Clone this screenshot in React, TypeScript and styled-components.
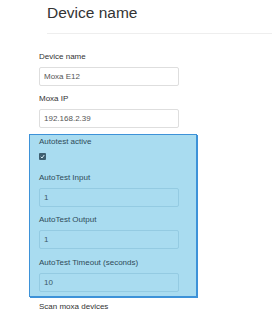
import React from "react";
import styled, { createGlobalStyle } from "styled-components";

const GlobalStyle = createGlobalStyle`
  body {
    margin: 0;
    background: #ffffff;
    font-family: "Liberation Sans", Arial, sans-serif;
  }
`;

const Page = styled.div`
  width: 272px;
  height: 312px;
  overflow: hidden;
  background: #ffffff;
`;

const PageHeader = styled.div`
  margin-left: 47px;
  padding: 4px 0 11px;
  border-bottom: 1px solid #eeeeee;
`;

const Title = styled.h1`
  margin: 0;
  font-size: 15.5px;
  line-height: 18px;
  font-weight: 400;
  color: #333333;
`;

const Form = styled.div`
  display: flex;
  flex-direction: column;
  gap: 7.5px;
  padding: 16.5px 0 0 29px;
`;

const Field = styled.div<{ extra?: number }>`
  display: flex;
  flex-direction: column;
  align-items: flex-start;
  padding-left: 10px;
  margin-bottom: ${({ extra }) => extra || 0}px;
`;

const Label = styled.label`
  font-size: 8px;
  line-height: 11px;
  color: #333333;
  margin-bottom: 5px;
`;

const Input = styled.input`
  box-sizing: border-box;
  width: 140px;
  height: 19px;
  padding: 0 4px;
  font-family: "Liberation Sans", Arial, sans-serif;
  font-size: 8px;
  color: #555555;
  background: #ffffff;
  border: 1px solid #dedede;
  border-radius: 2px;
  outline: none;
`;

const Highlight = styled.div`
  width: 168px;
  box-sizing: border-box;
  margin-top: -1.5px;
  padding: 1px 0 4px;
  display: flex;
  flex-direction: column;
  gap: 7.5px;
  background: #a9dcf0;
  border: 1px solid #3d92d8;
  box-shadow: 1px 1px 0 #3d92d8;

  ${Field} {
    padding-left: 9px;
  }

  ${Label} {
    color: #2f4b58;
  }

  ${Input} {
    background: transparent;
    border-color: #94cbe2;
    color: #3c5866;
  }
`;

const CheckBox = styled.span`
  width: 7px;
  height: 7px;
  margin-top: 1px;
  border-radius: 1px;
  background: #3e5f70;
  display: flex;
  align-items: center;
  justify-content: center;
`;

const After = styled.div`
  margin-top: -3px;
  padding-left: 10px;
  font-size: 8px;
  line-height: 11px;
  color: #333333;
`;

export default function App() {
  return (
    <Page>
      <GlobalStyle />
      <PageHeader>
        <Title>Device name</Title>
      </PageHeader>
      <Form>
        <Field>
          <Label>Device name</Label>
          <Input defaultValue="Moxa E12" />
        </Field>
        <Field>
          <Label>Moxa IP</Label>
          <Input defaultValue="192.168.2.39" />
        </Field>
        <Highlight>
          <Field extra={4}>
            <Label>Autotest active</Label>
            <CheckBox>
              <svg width="5" height="5" viewBox="0 0 10 10">
                <path d="M1.5 5.5 L4 8 L8.5 2" fill="none" stroke="#d8ecf4" strokeWidth="2" />
              </svg>
            </CheckBox>
          </Field>
          <Field>
            <Label>AutoTest Input</Label>
            <Input defaultValue="1" />
          </Field>
          <Field>
            <Label>AutoTest Output</Label>
            <Input defaultValue="1" />
          </Field>
          <Field>
            <Label>AutoTest Timeout (seconds)</Label>
            <Input defaultValue="10" />
          </Field>
        </Highlight>
        <After>Scan moxa devices</After>
      </Form>
    </Page>
  );
}
